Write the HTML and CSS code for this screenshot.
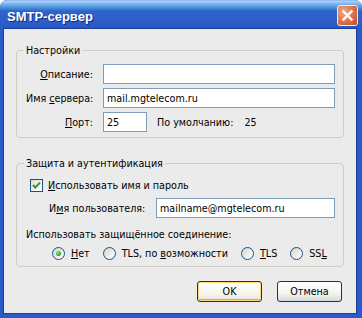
FILE: index.html
```html
<!DOCTYPE html>
<html lang="ru">
<head>
<meta charset="UTF-8">
<title>SMTP-сервер</title>
<link rel="stylesheet" href="styles.css">
</head>
<body>
  <div class="window">
    <div class="titlebar">
      <span class="title">SMTP-сервер</span>
      <span class="close-btn">
        <svg width="19" height="19" viewBox="0 0 19 19"><path d="M5.5 5.5 L13.5 13.5 M13.5 5.5 L5.5 13.5" stroke="#fff" stroke-width="2.4" stroke-linecap="square"/></svg>
      </span>
    </div>

    <div class="client">
      <fieldset class="group">
        <legend>Настройки</legend>
        <div class="form-grid">
          <label class="field-label"><u>О</u>писание:</label>
          <input class="text-input" type="text" value="">

          <label class="field-label">Имя <u>с</u>ервера:</label>
          <input class="text-input" type="text" value="mail.mgtelecom.ru">

          <label class="field-label"><u>П</u>орт:</label>
          <div class="port-row">
            <input class="text-input port-input" type="text" value="25">
            <span class="default-label">По умолчанию:</span>
            <span class="default-value">25</span>
          </div>
        </div>
      </fieldset>

      <fieldset class="group group-security">
        <legend>Защита и аутентификация</legend>
        <div class="check-row">
          <span class="checkbox">
            <svg width="11" height="11" viewBox="0 0 11 11"><path d="M2 5 L4.3 7.5 L9 2.6" stroke="#21a121" stroke-width="2" fill="none"/></svg>
          </span>
          <span><u>И</u>спользовать имя и пароль</span>
        </div>
        <div class="user-row">
          <label class="user-label">И<u>м</u>я пользователя:</label>
          <input class="text-input" type="text" value="mailname@mgtelecom.ru">
        </div>
        <div class="secure-label">Использовать защищённое соединение:</div>
        <div class="radio-row">
          <span class="radio-item"><span class="radio checked"></span><span><u>Н</u>ет</span></span>
          <span class="radio-item"><span class="radio"></span><span>TLS, по <u>в</u>озможности</span></span>
          <span class="radio-item"><span class="radio"></span><span><u>T</u>LS</span></span>
          <span class="radio-item"><span class="radio"></span><span>SS<u>L</u></span></span>
        </div>
      </fieldset>

      <div class="buttons">
        <button class="btn btn-default">OK</button>
        <button class="btn">Отмена</button>
      </div>
    </div>
  </div>
</body>
</html>
```

FILE: styles.css
```css
body {
  margin: 0;
  background-color: #fff;
  font-family: "DejaVu Sans", Verdana, sans-serif;
  font-size: 9.6px;
  color: #000;
  white-space: nowrap;
}

.window {
  width: 362px;
  height: 318px;
  box-sizing: border-box;
  display: flex;
  flex-direction: column;
  background-color: #2b5bc9;
  border-radius: 7px 7px 0 0;
  overflow: hidden;
}

.titlebar {
  height: 28px;
  flex-shrink: 0;
  display: flex;
  justify-content: space-between;
  align-items: flex-start;
  padding: 0 4px 0 7px;
  background: linear-gradient(to bottom, #7ea7ea 0, #b4d2fa 1px, #8dbdf5 3px, #6aa8ea 5px, #4e9ad6 7px, #3c7fd8 9px, #2f62cb 11px, #2c5cc8 24px, #2956c2 28px);
}

.title {
  font-family: "Liberation Sans", Arial, sans-serif;
  font-weight: bold;
  font-size: 13px;
  line-height: 16px;
  padding-top: 9px;
  color: #fff;
  text-shadow: 1px 1px #0f2a7a;
}

.close-btn {
  width: 19px;
  height: 19px;
  margin-top: 5px;
  border: 1px solid #f4ece8;
  border-radius: 3px;
  background: radial-gradient(circle at 30% 30%, #eba98a 0, #de7a55 45%, #c9461f 100%);
}

.close-btn svg {
  display: block;
}

.client {
  flex: 1;
  min-width: 0;
  margin: 0 5px 4px 3px;
  border: 1px solid #1d3f9c;
  background-color: #ebebeb;
  padding: 15px 12px 0 12px;
  display: flex;
  flex-direction: column;
}

.group {
  margin: 0;
  min-width: 0;
  padding: 0 8px 5px 9px;
  border: 1px solid #cdcdc4;
  border-radius: 4px;
}

.group legend {
  padding: 0 2px;
  margin-left: -2px;
  line-height: 13px;
}

.form-grid {
  display: grid;
  grid-template-columns: 67px 1fr;
  column-gap: 10px;
  row-gap: 4px;
  padding-top: 7px;
  align-items: center;
}

.field-label {
  text-align: right;
}

.text-input {
  height: 20px;
  box-sizing: border-box;
  border: 1px solid #7f9db9;
  background-color: #fff;
  padding: 0 3px;
  font-family: inherit;
  font-size: 9.6px;
  color: #000;
  outline: none;
  min-width: 0;
}

.port-row {
  display: flex;
  align-items: center;
}

.port-input {
  width: 44px;
}

.default-label {
  margin-left: 10px;
}

.default-value {
  margin-left: 11px;
}

.group-security {
  margin-top: 19px;
  padding-bottom: 6px;
}

.check-row {
  display: flex;
  align-items: center;
  height: 13px;
  margin-top: 9px;
  padding-left: 4px;
  gap: 5px;
}

.checkbox {
  width: 13px;
  height: 13px;
  box-sizing: border-box;
  border: 1px solid #1c5180;
  background: linear-gradient(135deg, #dcdcd7 0, #f6f6f4 70%, #fff 100%);
}

.checkbox svg {
  display: block;
}

.user-row {
  display: flex;
  align-items: center;
  margin-top: 6px;
  padding-left: 23px;
}

.user-label {
  width: 97px;
  margin-right: 10px;
  flex-shrink: 0;
}

.user-row .text-input {
  flex: 1;
}

.secure-label {
  margin-top: 10px;
  line-height: 13px;
}

.radio-row {
  display: flex;
  align-items: center;
  height: 13px;
  margin-top: 6px;
  padding-left: 26px;
}

.radio-item {
  display: flex;
  align-items: center;
  gap: 6px;
  margin-right: 13px;
}

.radio {
  width: 13px;
  height: 13px;
  box-sizing: border-box;
  border: 1px solid #1c5180;
  border-radius: 50%;
  background: linear-gradient(135deg, #d4d4cc 0, #f4f4f2 70%, #fff 100%);
  display: flex;
  align-items: center;
  justify-content: center;
}

.radio.checked::after {
  content: "";
  width: 5px;
  height: 5px;
  border-radius: 50%;
  background: radial-gradient(circle at 35% 35%, #8fe58f 0, #21a121 70%);
}

.buttons {
  display: flex;
  justify-content: flex-end;
  gap: 15px;
  margin-top: 14px;
  margin-right: 2px;
}

.btn {
  width: 65px;
  height: 21px;
  box-sizing: border-box;
  border: 1px solid #003c74;
  border-radius: 3px;
  padding: 0;
  font-family: inherit;
  font-size: 9.6px;
  color: #000;
  background: linear-gradient(to bottom, #fff 0, #f4f4f0 60%, #e4e2da 85%, #c7d5e8 100%);
}

.btn-default {
  background: linear-gradient(to bottom, #fff 0, #f6f5ef 60%, #e6e3d8 100%);
  box-shadow: inset 0 0 0 1px #fbd779, inset 0 -2px 0 0 #f1ab2e;
}
```
